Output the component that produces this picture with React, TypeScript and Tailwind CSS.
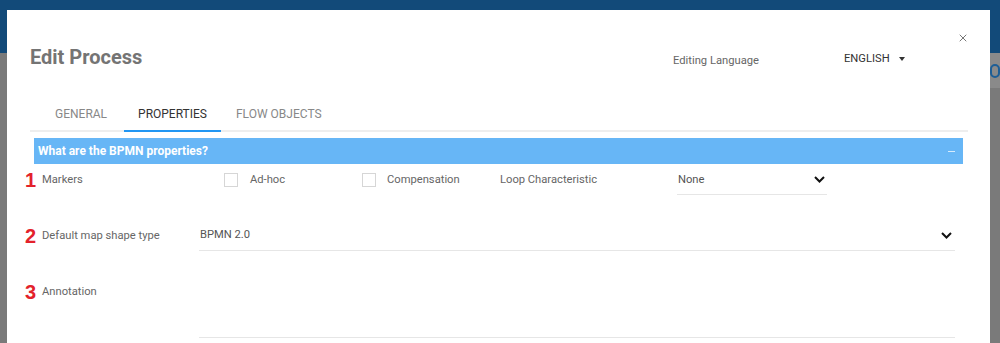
import { X } from "lucide-react"

function Chevron() {
  return (
    <svg width="11" height="7" viewBox="0 0 11 7" fill="none">
      <path d="M1 1l4.5 4.5L10 1" stroke="#111" strokeWidth="2" />
    </svg>
  )
}

function Checkbox() {
  return <span className="block w-[14px] h-[14px] border border-[#d6d6d6] bg-white" />
}

function Num({ n }: { n: string }) {
  return (
    <span className="w-[17px] text-[20px] leading-[16px] font-bold text-[#e3222b] font-['Liberation_Sans',sans-serif]">
      {n}
    </span>
  )
}

export default function App() {
  return (
    <div className="relative w-full h-[343px] overflow-hidden bg-[#7a7a7a] font-['Roboto',sans-serif]">
      {/* page behind the dialog */}
      <div className="h-[53px] bg-[#124a79]" />
      <div className="flex justify-end h-[35px]">
        <div className="w-[10px] bg-[#8a8a8a] flex items-center">
          <span className="block w-[14px] h-[14px] rounded-full border-2 border-[#1d5e96] bg-[#8a8a8a]" />
        </div>
      </div>

      {/* dialog */}
      <div className="absolute left-[7px] top-[10px] w-[983px] bottom-0 bg-white">
        <div className="flex items-start pt-[35px] pl-[23px]">
          <h2 className="w-[643px] text-[20px] leading-[24px] font-bold text-[#747474]">Edit Process</h2>
          <span className="w-[171px] mt-[8px] text-[11.2px] leading-[16px] text-[#666]">Editing Language</span>
          <div className="w-[112px] mt-[6px] flex items-center text-[11.2px] leading-[16px] text-[#333]">
            <span>ENGLISH</span>
            <span className="ml-[9px] w-0 h-0 border-l-[3.5px] border-r-[3.5px] border-t-[4px] border-l-transparent border-r-transparent border-t-[#333]" />
          </div>
          <button className="-mt-[13px] ml-px text-[#777]">
            <X size={12} strokeWidth={2} />
          </button>
        </div>

        {/* tabs */}
        <div className="mt-[29px] ml-[23px] mr-[22px] pl-[11px] flex gap-[3px] border-b-2 border-[#eeeeee] text-[12px] leading-[16px]">
          <div className="h-[34px] -mb-[2px] px-[14px] flex items-center border-b-2 border-transparent text-[#888]">GENERAL</div>
          <div className="h-[34px] -mb-[2px] px-[14px] flex items-center border-b-2 border-[#2196f3] text-[#333]">PROPERTIES</div>
          <div className="h-[34px] -mb-[2px] pl-[12px] pr-[14px] flex items-center border-b-2 border-transparent text-[#888]">FLOW OBJECTS</div>
        </div>

        {/* section header */}
        <div className="mt-[6px] mx-[27px] h-[26px] bg-[#67b6f6] flex items-center justify-between pl-[4px] pr-[8px] text-white">
          <span className="text-[12px] font-bold">What are the BPMN properties?</span>
          <span className="block w-[7px] h-px bg-[#d6ebfc]" />
        </div>

        {/* row 1 */}
        <div className="flex items-start pl-[18px] text-[11.2px] leading-[16px] text-[#666]">
          <div className="w-[199px] mt-[8px] flex items-center">
            <Num n="1" />
            <span>Markers</span>
          </div>
          <div className="w-[138px] mt-[8px] flex items-center gap-[12px]">
            <Checkbox />
            <span>Ad-hoc</span>
          </div>
          <div className="w-[138px] mt-[8px] flex items-center gap-[11px]">
            <Checkbox />
            <span>Compensation</span>
          </div>
          <span className="w-[177px] mt-[8px]">Loop Characteristic</span>
          <div className="w-[150px] h-[31px] pt-px border-b border-[#e6e6e6] flex items-center justify-between pl-[1px] pr-[2px] text-[#555]">
            <span>None</span>
            <Chevron />
          </div>
        </div>

        {/* row 2 */}
        <div className="mt-[25px] flex items-start pl-[18px] pr-[35px] text-[11.2px] leading-[16px] text-[#666]">
          <div className="w-[174px] mt-[8px] flex items-center">
            <Num n="2" />
            <span>Default map shape type</span>
          </div>
          <div className="flex-1 h-[31px] border-b border-[#e6e6e6] flex items-center justify-between pl-[1px] pr-[3px] text-[#555]">
            <span>BPMN 2.0</span>
            <Chevron />
          </div>
        </div>

        {/* row 3 */}
        <div className="mt-[16px] flex items-start pl-[18px] pr-[35px] text-[11.2px] leading-[16px] text-[#666]">
          <div className="w-[174px] mt-[17px] flex items-center">
            <Num n="3" />
            <span>Annotation</span>
          </div>
          <div className="flex-1 h-[71px] border-b border-[#e6e6e6]" />
        </div>
      </div>
    </div>
  )
}
